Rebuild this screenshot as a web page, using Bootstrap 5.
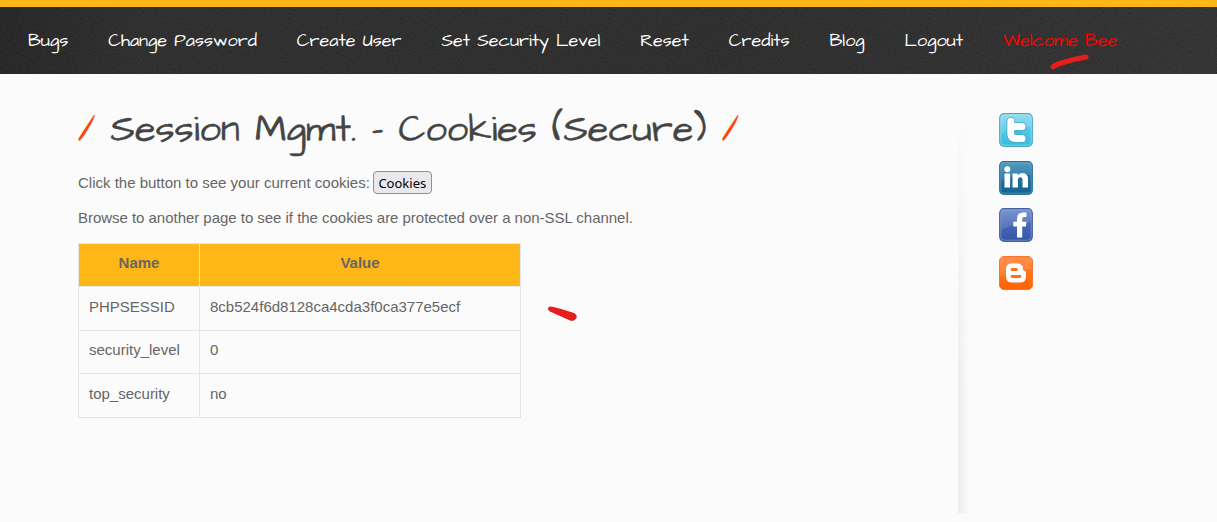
<!DOCTYPE html>
<html lang="en">
<head>
<meta charset="utf-8">
<meta name="viewport" content="width=device-width, initial-scale=1">
<title>Session Mgmt. - Cookies (Secure)</title>
<link href="https://cdn.jsdelivr.net/npm/bootstrap@5.3.0/dist/css/bootstrap.min.css" rel="stylesheet">
<style>
  body { background: #fbfbfb; color: #666; font: 15px/25px "Liberation Sans", Arial, sans-serif; min-height: 522px; overflow: hidden; }
  .hand { font-family: "Architects Daughter", Lato, sans-serif; font-weight: 400; }
  .topbar { height: 74px; border-top: 7px solid #ffb717; background: linear-gradient(100deg, #161616 0, #1f1f1f 12%, #1e1e1e 60%, #242424 100%); }
  .grain { opacity: .1; pointer-events: none; }
  .menu { padding: 20px 0 0 28px; gap: 40px; font-size: 18px; line-height: 28px; color: #fff; }
  .menu li { flex: none; white-space: nowrap; }
  .menu a { color: inherit; text-decoration: none; }
  .menu .m-welcome { color: #f00; }
  .mark-a { left: 1049px; top: 46px; }
  .content-pane { width: 880px; margin-left: 78px; height: 439px; padding-top: 31px; }
  .page-title { height: 50px; line-height: 50px; font-size: 38px; color: #444; margin-bottom: 15px; white-space: nowrap; -webkit-text-stroke: .35px; }
  .slash { color: #ff4000; }
  .cookie-btn { height: 23px; width: 59px; padding: 0; margin: 1px 0 0 3px; border: 1px solid #8f8f9d; border-radius: 4px; background: #e9e9ed; color: #000; font: 13px/23px "Noto Sans", sans-serif; }
  .click-line { height: 25px; margin-bottom: 10px; }
  .browse-line { margin-bottom: 12.5px; letter-spacing: -.03px; }
  .cookie-table { width: 443px; border-collapse: collapse; table-layout: fixed; }
  .cookie-table th, .cookie-table td { border: 1px solid #e6e6e6; height: 43.5px; padding: 0 10px 4px; }
  .cookie-table th { background: #ffb717; text-align: center; padding-bottom: 5px; }
  .cookie-table th:first-child { width: 121px; }
  .mark-b { left: 468px; top: 61px; }
  .divider { width: 12px; height: 401px; margin-top: 38px; background: linear-gradient(90deg, #ebebeb, #f6f6f6 60%, #fbfbfb); -webkit-mask-image: linear-gradient(transparent, #000 70%); mask-image: linear-gradient(transparent, #000 70%); }
  .social { padding: 39px 0 0 29px; gap: 13.5px; }
  .social a, .social svg { display: block; width: 34px; height: 34px; }
</style>
</head>
<body>
<header class="topbar position-relative overflow-hidden">
  <svg class="grain position-absolute top-0 start-0 w-100 h-100" aria-hidden="true"><filter id="noise" x="0" y="-.1" width="1" height="1.2"><feTurbulence type="fractalNoise" baseFrequency=".8" numOctaves="2" seed="4"/><feColorMatrix values="1 1 0 0 -.4 1 1 0 0 -.4 1 1 0 0 -.4 0 0 0 0 1"/></filter><rect width="100%" height="100%" filter="url(#noise)"/></svg>
  <ul class="menu hand d-flex list-unstyled mb-0 position-relative">
    <li><a href="#">Bugs</a></li>
    <li><a href="#">Change Password</a></li>
    <li><a href="#">Create User</a></li>
    <li><a href="#">Set Security Level</a></li>
    <li><a href="#">Reset</a></li>
    <li><a href="#">Credits</a></li>
    <li><a href="#">Blog</a></li>
    <li><a href="#">Logout</a></li>
    <li class="m-welcome">Welcome Bee</li>
  </ul>
  <svg class="mark-a position-absolute" width="42" height="18"><path d="M4 14Q6 12 14 9.500Q25 6 37 4" fill="none" stroke="#e71d1d" stroke-width="5" stroke-linecap="round"/></svg>
</header>
<div class="d-flex">
  <main class="content-pane flex-shrink-0">
    <h1 class="page-title hand"><span class="slash">/</span> Session Mgmt. - Cookies (Secure) <span class="slash">/</span></h1>
    <p class="click-line d-flex"><span>Click the button to see your current cookies:</span><button class="cookie-btn" type="button">Cookies</button></p>
    <p class="browse-line">Browse to another page to see if the cookies are protected over a non-SSL channel.</p>
    <div class="position-relative">
      <table class="cookie-table">
        <thead><tr><th>Name</th><th>Value</th></tr></thead>
        <tbody>
          <tr><td>PHPSESSID</td><td>8cb524f6d8128ca4cda3f0ca377e5ecf</td></tr>
          <tr><td>security_level</td><td>0</td></tr>
          <tr><td>top_security</td><td>no</td></tr>
        </tbody>
      </table>
      <svg class="mark-b position-absolute" width="34" height="20"><path d="M3.500 2.500Q7 2 28 9Q31.500 11 30.500 14Q28 18 24 16.500L4 7.500Q0 5 3.500 2.500" fill="#e71d1d"/></svg>
    </div>
  </main>
  <div class="divider flex-shrink-0"></div>
  <aside class="social d-flex flex-column">
    <svg width="0" height="0" class="position-absolute"><defs>
      <linearGradient id="tw" x2="0" y2="1"><stop stop-color="#86d9ee"/><stop offset=".5" stop-color="#54c6e6"/><stop offset="1" stop-color="#35bde4"/></linearGradient>
      <linearGradient id="li" x2="0" y2="1"><stop stop-color="#4090b8"/><stop offset=".5" stop-color="#1d6f9f"/><stop offset="1" stop-color="#176391"/></linearGradient>
      <linearGradient id="fb" x2="0" y2="1"><stop stop-color="#6886cb"/><stop offset=".5" stop-color="#4766b4"/><stop offset="1" stop-color="#3556a9"/></linearGradient>
      <linearGradient id="bl" x2="0" y2="1"><stop stop-color="#ff8238"/><stop offset=".5" stop-color="#ff751f"/><stop offset="1" stop-color="#ff6200"/></linearGradient>
    </defs></svg>
    <a href="#" aria-label="Twitter"><svg viewBox="0 0 34 34"><rect x=".7" y=".7" width="32.600" height="32.600" rx="4.500" fill="url(#tw)" stroke="#4aa9c6" stroke-width="1.200"/><rect x="1.800" y="1.800" width="30.400" height="30.400" rx="3.500" fill="none" stroke="#fff" stroke-opacity=".35"/><path d="M2 2H32V14Q20 13 2 21Z" fill="#fff" opacity=".13"/><path d="M11.800 8.300V20.500Q12 25.500 16.500 25.500H23M12 13.500H23" fill="none" stroke="#3fa9c8" stroke-width="8.500" stroke-linecap="round" stroke-linejoin="round"/><path d="M11.800 8.300V20.500Q12 25.500 16.500 25.500H23M12 13.500H23" fill="none" stroke="#fff" stroke-width="7" stroke-linecap="round" stroke-linejoin="round"/><path d="M16 19.500H22" stroke="#49bbd9" stroke-width="2.500" stroke-linecap="round"/></svg></a>
    <a href="#" aria-label="LinkedIn"><svg viewBox="0 0 34 34"><rect x=".7" y=".7" width="32.600" height="32.600" rx="4" fill="url(#li)" stroke="#29749e" stroke-width="1.200"/><rect x="1.800" y="1.800" width="30.400" height="30.400" rx="3" fill="none" stroke="#fff" stroke-opacity=".22"/><path d="M2 2H32V14Q18 13 2 20Z" fill="#fff" opacity=".1"/><circle cx="8.300" cy="8.200" r="3" fill="#fff"/><path d="M5.500 12.500H11.100V26.500H5.500ZM13.500 12.500H18.700V14.500Q20 12 23.200 12Q29 12 29 18.500V26.500H23.500V19.300Q23.500 16.200 21.300 16.200Q18.900 16.200 18.900 19.500V26.500H13.500Z" fill="#fff"/></svg></a>
    <a href="#" aria-label="Facebook"><svg viewBox="0 0 34 34"><rect x=".7" y=".7" width="32.600" height="32.600" rx="4.500" fill="url(#fb)" stroke="#4460a4" stroke-width="1.200"/><rect x="1.800" y="1.800" width="30.400" height="30.400" rx="3.500" fill="none" stroke="#fff" stroke-opacity=".25"/><path d="M2 2H32V14Q18 14 2 22Z" fill="#fff" opacity=".12"/><path d="M18 29.500V18.500H14.300V13.800H18V10.500Q18 4.500 24 4.500H27.500V9H25.200Q23.200 9 23.200 11V13.800H27.500L26.900 18.500H23.200V29.500Z" fill="#fff"/></svg></a>
    <a href="#" aria-label="Blogger"><svg viewBox="0 0 34 34"><rect x=".5" y=".5" width="33" height="33" rx="4.500" fill="url(#bl)" stroke="#f9762e"/><path d="M1 1H33V13Q18 13 1 21Z" fill="#fff" opacity=".1"/><path d="M12.500 7.500H18Q24 7.500 24 13V13.500Q24 14.700 25.500 14.700Q27 14.700 27 16.500V20.500Q27 26.500 21 26.500H13Q7 26.500 7 20.500V13Q7 7.500 12.500 7.500Z" fill="#fff"/><path d="M13 13.500H17.500M13 20.500H21" stroke="#ff7119" stroke-width="2.800" stroke-linecap="round"/></svg></a>
  </aside>
</div>
<script src="https://cdn.jsdelivr.net/npm/bootstrap@5.3.0/dist/js/bootstrap.bundle.min.js"></script>
</body>
</html>
